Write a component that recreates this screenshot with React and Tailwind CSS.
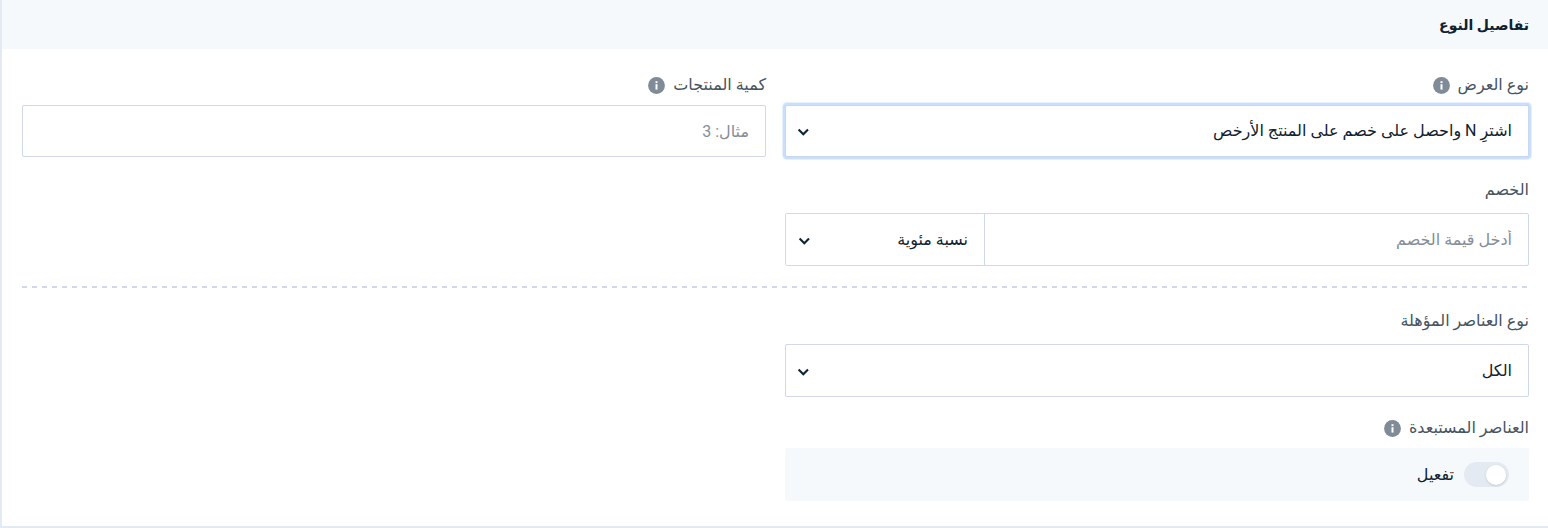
import React from "react";

function InfoIcon() {
  return (
    <svg viewBox="0 0 17 17" className="size-[17px] shrink-0" aria-hidden="true">
      <circle cx="8.5" cy="8.5" r="8.4" fill="#7f8b96" />
      <rect x="7.5" y="4.2" width="2" height="1.9" fill="#fff" />
      <rect x="7.5" y="7.2" width="2" height="5.4" fill="#fff" />
    </svg>
  );
}

function Chevron() {
  return (
    <svg
      viewBox="0 0 12 10"
      className="pointer-events-none absolute left-3 top-1/2 h-2.5 w-3 -translate-y-1/2"
      fill="none"
      stroke="#0c2530"
      strokeWidth="2.1"
      aria-hidden="true"
    >
      <path d="M1.6 3.6 6.3 8.2 11 3.6" />
    </svg>
  );
}

function Label({ htmlFor, info, className = "", children }) {
  return (
    <div className={`flex h-6 items-center gap-2 text-[#46545f] ${className}`}>
      <label htmlFor={htmlFor} className="text-base leading-6">
        {children}
      </label>
      {info && <InfoIcon />}
    </div>
  );
}

function Select({ id, options, label, className = "", selectClass = "" }) {
  return (
    <div className={`relative ${className}`}>
      <select
        id={id}
        aria-label={label}
        className={`block w-full appearance-none bg-white pr-4 pl-10 text-base text-[#10222e] outline-none ${selectClass}`}
      >
        {options.map((option) => (
          <option key={option}>{option}</option>
        ))}
      </select>
      <Chevron />
    </div>
  );
}

export default function App() {
  return (
    <section
      dir="rtl"
      lang="ar"
      className="border-b-2 border-l-2 border-[#e4eaf4] bg-white font-['Roboto','DejaVu_Sans',sans-serif]"
    >
      <header className="flex h-[49px] items-center bg-[#f5f9fc] pr-[19px]">
        <h2 className="text-sm font-bold text-[#10222e]">تفاصيل النوع</h2>
      </header>

      <div className="pt-6 pr-[19px] pb-[25px] pl-5">
        <div className="grid grid-cols-2 gap-x-[19px]">
          <div>
            <Label htmlFor="offer-type" info className="mb-2">
              نوع العرض
            </Label>
            <Select
              id="offer-type"
              options={["اشترِ N واحصل على خصم على المنتج الأرخص"]}
              selectClass="h-[52px] rounded-xs border border-[#c8d7ee] ring-2 ring-[#c9dffb] shadow-[0_0_0_3px_#e6f0fd]"
            />
          </div>
          <div>
            <Label htmlFor="quantity" info className="mb-2">
              كمية المنتجات
            </Label>
            <input
              id="quantity"
              type="text"
              placeholder="مثال: 3"
              className="block h-[52px] w-full rounded-xs border border-[#d0d8ea] px-4 text-base outline-none placeholder:text-[#858d98]"
            />
          </div>
          <div className="mt-[21px]">
            <Label htmlFor="discount" className="mb-[11px]">
              الخصم
            </Label>
            <div className="flex h-[53px] rounded-xs border border-[#d0d8ea]">
              <input
                id="discount"
                type="text"
                placeholder="أدخل قيمة الخصم"
                className="min-w-0 flex-1 px-4 text-base outline-none placeholder:text-[#858d98]"
              />
              <Select
                label="نوع الخصم"
                options={["نسبة مئوية"]}
                className="w-[199px] border-r border-[#d0d8ea]"
                selectClass="h-full"
              />
            </div>
          </div>
        </div>

        <div className="mt-5 h-0.5 bg-[repeating-linear-gradient(to_right,#d0d8ea_0_5px,transparent_5px_10px)]" />

        <div className="grid grid-cols-2 gap-x-[19px] pt-[21px]">
          <div>
            <Label htmlFor="eligible" className="mb-[11px]">
              نوع العناصر المؤهلة
            </Label>
            <Select
              id="eligible"
              options={["الكل"]}
              selectClass="h-[53px] rounded-xs border border-[#d0d8ea]"
            />
            <Label htmlFor="excluded" info className="mt-[19px] mb-2">
              العناصر المستبعدة
            </Label>
            <label className="flex h-[53px] items-center gap-2.5 rounded-xs bg-[#f5f9fc] px-5 text-base text-[#10222e]">
              <input
                id="excluded"
                type="checkbox"
                role="switch"
                className="flex h-[25px] w-[45px] appearance-none items-center rounded-full bg-[#e4eaf2] px-[3px] before:size-5 before:rounded-full before:bg-white before:shadow-sm before:content-['']"
              />
              تفعيل
            </label>
          </div>
        </div>
      </div>
    </section>
  );
}
